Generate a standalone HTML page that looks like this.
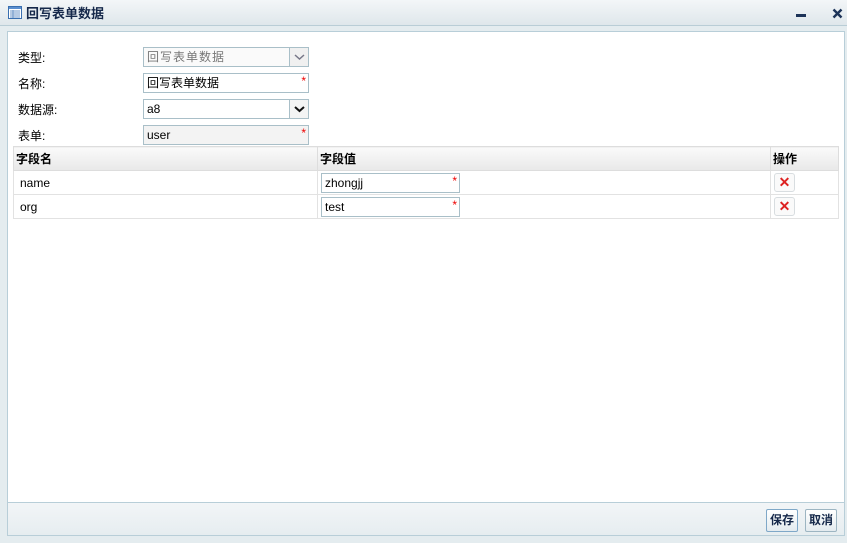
<!DOCTYPE html>
<html><head><meta charset="utf-8"><style>
*{box-sizing:border-box;margin:0;padding:0}
body{width:847px;height:543px;background:#e4ecef;font-family:"Liberation Sans","Noto Sans CJK SC",sans-serif;font-size:12px;color:#000;position:relative;overflow:hidden}
.title{position:absolute;left:0;top:0;width:847px;height:26px;background:linear-gradient(#f3f6f8,#dfe7eb);border-bottom:1px solid #b9cdd6}
.title .t{position:absolute;left:26px;top:3px;font-weight:bold;font-size:13px;color:#15284a}
.panel{position:absolute;left:7px;top:31px;width:838px;height:472px;background:#fff;border:1px solid #b8ced8}
.foot{position:absolute;left:7px;top:502px;width:838px;height:34px;background:linear-gradient(#f2f5f7,#e6edf0);border:1px solid #b8ced8}
.lbl{position:absolute;left:18px;font-size:12px}
.inp{position:absolute;left:143px;width:166px;height:20px;border:1px solid #a9bfc8;background:#fff;padding:1px 3px;font-size:12px;line-height:16px}
.star{position:absolute;right:2px;top:-1px;color:#e00;font-size:12px}
.dd{position:absolute;right:0;top:0;width:19px;height:18px;border-left:1px solid #a9bfc8;background:#f0f0f0}
table{position:absolute;left:13px;top:146px;width:826px;border-collapse:collapse}
th{height:24px;text-align:left;font-weight:bold;background:linear-gradient(#fafafa,#e8e8e8);border:1px solid #ddd;padding:0 2px}
td{height:24px;border:1px solid #e2e2e2;padding:0 6px}
.ci{position:relative;width:139px;height:20px;border:1px solid #a9bfc8;padding:1px 3px;line-height:16px;margin-left:-3px}
.xb{width:21px;height:19px;border:1px solid #d8dde0;border-radius:3px;background:#fafafa;color:#d22;font-weight:bold;text-align:center;line-height:17px;font-size:14px;margin-left:-3px}
.btn{position:absolute;top:509px;height:23px;border:1px solid #9db5c2;border-radius:2px;background:linear-gradient(#fff,#e3ebef);font-weight:bold;color:#15284a;font-size:12px;line-height:19px;padding:1px 3px}
</style></head><body>
<div class="title">
<svg style="position:absolute;left:8px;top:6px" width="14" height="13" viewBox="0 0 14 13"><rect x=".5" y=".5" width="13" height="12" fill="#fff" stroke="#3a6fb0"/><rect x="1" y="1" width="12" height="2" fill="#5b8fd0"/><path d="M2 5h10M2 7h10M2 9h10M2 11h10M5 4v8" stroke="#6d95c8" stroke-width="1"/></svg>
<div class="t">回写表单数据</div>
<div style="position:absolute;left:796px;top:14px;width:10px;height:3px;background:#1c3358"></div>
<svg style="position:absolute;left:832px;top:8px" width="11" height="11"><path d="M1.5 1.5l8 8M9.5 1.5l-8 8" stroke="#1c3358" stroke-width="2.4"/></svg>
</div>
<div class="panel"></div>
<div class="foot"></div>
<div class="lbl" style="top:49px">类型:</div>
<div class="inp" style="top:47px;color:#777;background:#fafafa;letter-spacing:1px">回写表单数据<div class="dd"><svg width="19" height="18"><path d="M5 7l4.5 4 4.5-4" stroke="#778" stroke-width="1.5" fill="none"/></svg></div></div>
<div class="lbl" style="top:75px">名称:</div>
<div class="inp" style="top:73px">回写表单数据<span class="star">*</span></div>
<div class="lbl" style="top:101px">数据源:</div>
<div class="inp" style="top:99px">a8<div class="dd" style="background:#f4f4f4"><svg width="19" height="18"><path d="M5 7l4.5 4 4.5-4" stroke="#111" stroke-width="2" fill="none"/></svg></div></div>
<div class="lbl" style="top:127px">表单:</div>
<div class="inp" style="top:125px;background:#f3f3f3">user<span class="star">*</span></div>
<table>
<tr><th style="width:304px">字段名</th><th style="width:453px">字段值</th><th>操作</th></tr>
<tr><td>name</td><td><div class="ci">zhongjj<span class="star">*</span></div></td><td><div class="xb">✕</div></td></tr>
<tr><td>org</td><td><div class="ci">test<span class="star">*</span></div></td><td><div class="xb">✕</div></td></tr>
</table>
<div class="btn" style="left:766px;border-color:#7fa8c8">保存</div>
<div class="btn" style="left:805px">取消</div>
</body></html>
